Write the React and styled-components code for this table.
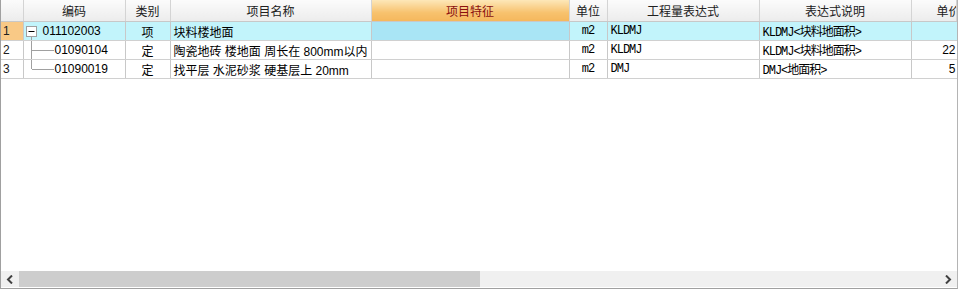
import styled, { createGlobalStyle } from "styled-components";

const GlobalStyle = createGlobalStyle`
  html, body {
    margin: 0;
    padding: 0;
    background: #ffffff;
  }
`;

const columns = [
  { key: "code", title: "编码", width: 102 },
  { key: "type", title: "类别", width: 45 },
  { key: "name", title: "项目名称", width: 201 },
  { key: "feature", title: "项目特征", width: 198, active: true },
  { key: "unit", title: "单位", width: 38 },
  { key: "expr", title: "工程量表达式", width: 152 },
  { key: "desc", title: "表达式说明", width: 152 },
  { key: "price", title: "单价", clipped: true },
];

const rows = [
  {
    code: "011102003",
    type: "项",
    name: "块料楼地面",
    unit: "m2",
    expr: "KLDMJ",
    desc: "KLDMJ<块料地面积>",
    price: "",
    level: 0,
  },
  {
    code: "01090104",
    type: "定",
    name: "陶瓷地砖 楼地面 周长在 800mm以内",
    unit: "m2",
    expr: "KLDMJ",
    desc: "KLDMJ<块料地面积>",
    price: "22",
    level: 1,
  },
  {
    code: "01090019",
    type: "定",
    name: "找平层 水泥砂浆 硬基层上 20mm",
    unit: "m2",
    expr: "DMJ",
    desc: "DMJ<地面积>",
    price: "5",
    level: 1,
    last: true,
  },
];

const App = () => {
  return (
    <>
      <GlobalStyle />
      <Frame>
        <GridArea>
          <Table>
            <colgroup>
              <col style={{ width: 22 }} />
              {columns.map((c) => (
                <col key={c.key} style={c.width ? { width: c.width } : undefined} />
              ))}
            </colgroup>
            <thead>
              <tr>
                <HeadCell />
                {columns.map((c) => (
                  <HeadCell key={c.key} $active={c.active} $clipped={c.clipped}>
                    {c.title}
                  </HeadCell>
                ))}
              </tr>
            </thead>
            <tbody>
              {rows.map((r, i) => (
                <Row key={r.code} $selected={i === 0}>
                  <NumCell $selected={i === 0}>{i + 1}</NumCell>
                  <CodeCell>
                    <TreeWrap>
                      {r.level === 0 ? (
                        <>
                          <Toggle>
                            <svg width="11" height="11" viewBox="0 0 11 11">
                              <rect x="0.5" y="0.5" width="10" height="10" fill="#fff" stroke="#a0a0a0" />
                              <line x1="2.5" y1="5.5" x2="8.5" y2="5.5" stroke="#000" />
                            </svg>
                          </Toggle>
                          <TreeStem />
                        </>
                      ) : (
                        <TreeBranch $last={r.last} />
                      )}
                      <CodeText $level={r.level}>{r.code}</CodeText>
                    </TreeWrap>
                  </CodeCell>
                  <Cell $align="center">{r.type}</Cell>
                  <Cell>{r.name}</Cell>
                  <Cell $active={i === 0} />
                  <MonoCell $align="center">{r.unit}</MonoCell>
                  <MonoCell>{r.expr}</MonoCell>
                  <MonoCell>{r.desc}</MonoCell>
                  <PriceCell>{r.price}</PriceCell>
                </Row>
              ))}
            </tbody>
          </Table>
        </GridArea>
        <ScrollBar>
          <ArrowButton>
            <svg width="8" height="9" viewBox="0 0 8 9">
              <path d="M6 0.5 L2 4.5 L6 8.5" fill="none" stroke="#404040" strokeWidth="2" />
            </svg>
          </ArrowButton>
          <Track>
            <Thumb style={{ width: 461 }} />
          </Track>
          <ArrowButton>
            <svg width="8" height="9" viewBox="0 0 8 9">
              <path d="M2 0.5 L6 4.5 L2 8.5" fill="none" stroke="#404040" strokeWidth="2" />
            </svg>
          </ArrowButton>
        </ScrollBar>
      </Frame>
    </>
  );
};

export default App;

const Frame = styled.div`
  box-sizing: border-box;
  width: 958px;
  height: 289px;
  border: 1px solid #a0a0a0;
  border-top: none;
  border-right-color: #b4b4b4;
  display: flex;
  flex-direction: column;
  overflow: hidden;
  background: #fff;
`;

const GridArea = styled.div`
  flex: 1;
  overflow: hidden;
`;

const Table = styled.table`
  border-collapse: collapse;
  table-layout: fixed;
  width: 100%;
  font-family: "Liberation Sans", "Noto Sans CJK SC", sans-serif;
  font-size: 12px;
  color: #000;
`;

const HeadCell = styled.th`
  height: 21px;
  padding: 0 0 0 ${(p) => (p.$clipped ? "25px" : "0")};
  font-weight: normal;
  text-align: ${(p) => (p.$clipped ? "left" : "center")};
  border-right: 1px solid #d4d4d4;
  border-bottom: 1px solid #c8c8c8;
  background: ${(p) =>
    p.$active
      ? "linear-gradient(#fde7b8, #f7c26e 60%, #f5b75c)"
      : "linear-gradient(#fbfbfb, #ececec)"};
  color: ${(p) => (p.$active ? "#8a1010" : "#202020")};
  white-space: nowrap;
  overflow: hidden;
`;

const Row = styled.tr`
  height: 19px;
  background: ${(p) => (p.$selected ? "#c2f4fb" : "#fff")};
`;

const Cell = styled.td`
  padding: 0 3px;
  height: 18px;
  border-right: 1px solid #c8c8c8;
  border-bottom: 1px solid #d0d0d0;
  text-align: ${(p) => p.$align || "left"};
  white-space: nowrap;
  overflow: hidden;
  background: ${(p) => (p.$active ? "#a9e5f5" : "transparent")};
`;

const NumCell = styled(Cell)`
  padding: 0 2px;
  background: ${(p) => (p.$selected ? "#f9c986" : "#fff")};
  color: #202020;
`;

const CodeCell = styled(Cell)`
  padding: 0;
  position: relative;
`;

const MonoCell = styled(Cell)`
  font-family: "Liberation Mono", "Noto Sans CJK SC", monospace;
  font-size: 12px;
  letter-spacing: -1px;
`;

const PriceCell = styled(Cell)`
  text-align: right;
  padding: 0 1px 0 0;
  border-right: none;
`;

const TreeWrap = styled.div`
  display: flex;
  align-items: center;
  height: 18px;
`;

const Toggle = styled.span`
  display: flex;
  margin-left: 2px;
  margin-right: 6px;
  position: relative;
  z-index: 1;
`;

const TreeStem = styled.span`
  position: absolute;
  left: 7px;
  top: 14px;
  bottom: -1px;
  border-left: 1px solid #a0a0a0;
`;

const TreeBranch = styled.span`
  position: absolute;
  left: 7px;
  top: 0;
  height: ${(p) => (p.$last ? "9px" : "100%")};
  width: 22px;
  border-left: 1px solid #a0a0a0;

  &::after {
    content: "";
    position: absolute;
    left: 0;
    top: 9px;
    width: 22px;
    border-top: 1px solid #a0a0a0;
  }
`;

const CodeText = styled.span`
  padding-left: ${(p) => (p.$level ? "31px" : "0")};
`;

const ScrollBar = styled.div`
  display: flex;
  height: 16px;
  margin-bottom: 1px;
  background: #f0f0f0;
`;

const ArrowButton = styled.div`
  width: 18px;
  display: flex;
  align-items: center;
  justify-content: center;
  background: #f0f0f0;
`;

const Track = styled.div`
  flex: 1;
  display: flex;
  background: #f0f0f0;
`;

const Thumb = styled.div`
  background: #cdcdcd;
  height: 100%;
`;
